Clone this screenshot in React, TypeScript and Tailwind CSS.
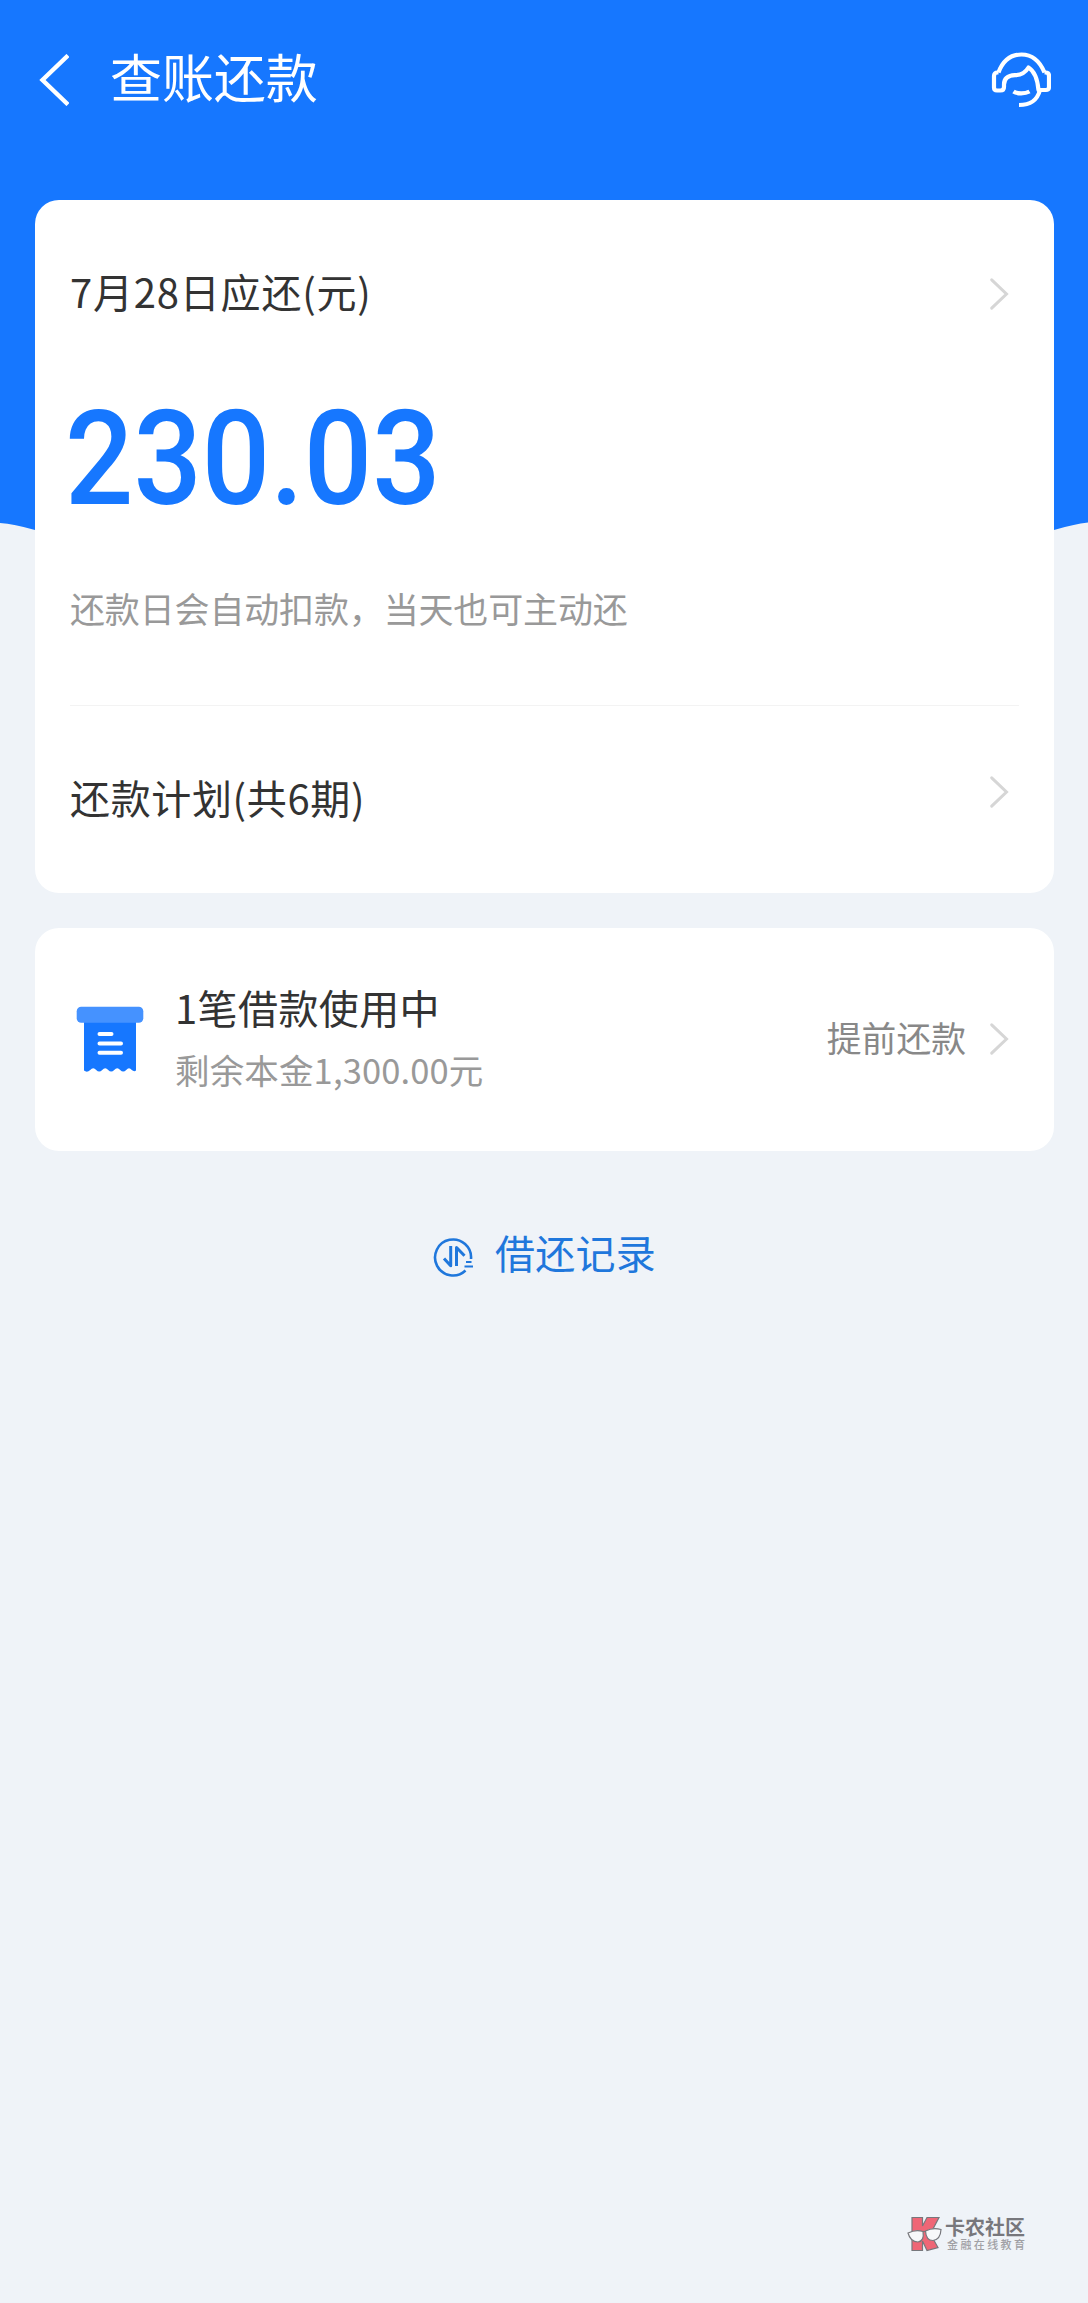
import React from "react";

const Chevron = () => (
  <svg className="block h-[34px] w-[20px] shrink-0" viewBox="0 0 20 34" fill="none">
    <path d="M2.7 2.8 17.500 17 2.7 31.2" stroke="#d6d6d6" strokeWidth="3" strokeLinecap="round" />
  </svg>
);

const BackIcon = () => (
  <svg className="block h-[52px] w-[32px] shrink-0" viewBox="0 0 32 52" fill="none">
    <path d="M31 1.5 5.5 26 31 50.5" stroke="#fff" strokeWidth="4.4" />
  </svg>
);

const HeadsetIcon = () => (
  <svg className="block h-[58px] w-[60px] shrink-0" viewBox="0 0 60 58" fill="none" stroke="#fff" strokeWidth="4.2" strokeLinejoin="round">
    <path d="M7.5 21.5C12 9.500 20 3.500 30.500 3.500S48.500 9.500 53.500 21.500" />
    <path d="M7.500 21.500H6.500Q3 21.500 3 25V36.500Q3 39.500 6 39.500H9.500Q13 39.500 13 36V33.500C13 27 17.500 24.500 24 24.200C31 24 34.500 21.500 37.500 16.500C44 20.500 46.500 28 47.500 39H55Q58 39 58 36V25Q58 21.500 54.500 21.500H53.500" />
    <path d="M49 39C46 50 39 54 28 54" />
    <path d="M22.500 40.500C26 43 34 43 38.500 40.500" />
  </svg>
);

const BillIcon = () => (
  <svg className="block h-[66px] w-[68px] shrink-0" viewBox="0 0 68 66">
    <path d="M8 12H60V64.500Q58 66 55.800 64Q53 60.500 50.200 64Q47.200 67 44.200 64Q41.200 60.500 38.200 64Q35.200 67 32.200 64Q29.200 60.500 26.200 64Q23.200 67 20.200 64Q17.200 60.500 14.200 64Q11 67 8 64.500Z" fill="#1677ff" />
    <rect x="0.700" y="0.700" width="66.600" height="16" rx="4.500" fill="#4592ff" />
    <path d="M23.500 28H35.500M23.500 37.500H45M23.500 46.800H45" stroke="#fff" strokeWidth="4" strokeLinecap="round" />
  </svg>
);

const RecordIcon = () => (
  <svg className="block h-[40px] w-[42px] shrink-0" viewBox="0 0 42 40" fill="none" stroke="#1f77dc" strokeWidth="2.600">
    <path d="M38 22A18 18 0 1 0 32.500 33.500" />
    <path d="M17.700 9V28.800L11 21.500M23.500 29V10.500L31.500 18.800" strokeWidth="3" strokeLinejoin="round" />
    <path d="M33 25H38.500M31.500 29.500H40" strokeWidth="2" />
  </svg>
);

const CommunityLogo = () => (
  <svg className="block h-[36px] w-[36px] shrink-0" viewBox="0 0 36 36">
    <path d="M5 1.500H15.500V10L20 1.500H32L26 13 24.500 20 31 31.500 20 34.500 15.500 25V34.500H5V22Z" fill="#ef6676" stroke="#77777c" strokeWidth="1.200" />
    <path d="M1 17Q9 13 16 15.500Q17.500 25 11 26Q3.500 26 1 17Z" fill="#f7f8fa" stroke="#77777c" strokeWidth="1.200" />
    <path d="M18.500 15Q26 11 34 13.500Q33.500 23.500 26 24.500Q19 24.500 18.500 15Z" fill="#f7f8fa" stroke="#77777c" strokeWidth="1.200" />
    <path d="M16 15.500H18.500" stroke="#77777c" strokeWidth="1.200" />
  </svg>
);

export default function App() {
  return (
    <div className="relative isolate flex h-[2303px] w-full flex-col overflow-hidden bg-[#eff3f8] px-[35px] font-['Noto_Sans_CJK_SC',sans-serif] text-[#333]">
      <svg className="absolute left-0 top-0 -z-10 h-[532px] w-full" viewBox="0 0 1088 532" preserveAspectRatio="none">
        <path d="M0 0H1088V522.500Q1074 524 1054 530H35Q14 524 0 523Z" fill="#1677ff" />
      </svg>

      <header className="flex h-[200px] items-start justify-between pt-[51px] text-white">
        <div className="flex items-start pl-[2px]">
          <div className="pt-[3px]"><BackIcon /></div>
          <h1 className="ml-[41px] -mt-[1px] text-[52px] leading-[52px] tracking-[-0.1px]">查账还款</h1>
        </div>
        <div className="mr-[2px]"><HeadsetIcon /></div>
      </header>

      <main className="flex flex-col gap-[35px]">
        <section className="flex h-[693px] w-[1019px] flex-col rounded-[24px] bg-white px-[35px]">
          <div className="mt-[67px] flex h-[50px] items-center justify-between pr-[10px]">
            <h2 className="-mt-[2px] text-[40px] leading-[50px] tracking-[0.8px]">7月28日应还(元)</h2>
            <div className="pt-[4px]"><Chevron /></div>
          </div>
          <div className="-ml-[5px] mt-[77px] h-[130px] w-fit origin-left scale-x-[0.912] whitespace-nowrap font-[Roboto] text-[132px] font-medium leading-[130px] text-[#1677ff]">230.03</div>
          <p className="mt-[62px] text-[35px] leading-[44px] tracking-[-0.15px] text-[#999]">还款日会自动扣款，当天也可主动还</p>
          <div className="mt-[75px] h-px bg-[#f3f3f3]" />
          <div className="mt-[63px] flex h-[50px] items-center justify-between pr-[10px]">
            <h2 className="pt-[5px] text-[40px] leading-[50px] tracking-[0.65px]">还款计划(共6期)</h2>
            <div className="-mt-[4px]"><Chevron /></div>
          </div>
        </section>

        <section className="flex h-[223px] w-[1019px] items-start rounded-[24px] bg-white pl-[41px] pr-[45px]">
          <div className="mt-[78px]"><BillIcon /></div>
          <div className="ml-[31px] mt-[54px] flex flex-col">
            <h3 className="text-[40px] leading-[50px] tracking-[0.4px]">1笔借款使用中</h3>
            <p className="mt-[15px] text-[34.500px] leading-[44px] tracking-[0.15px] text-[#999]">剩余本金1,300.00元</p>
          </div>
          <div className="ml-auto mt-[87px] flex items-center text-[#888]">
            <span className="text-[34.800px] leading-[44px]">提前还款</span>
            <div className="ml-[23px] pt-[4px]"><Chevron /></div>
          </div>
        </section>
      </main>

      <div className="mt-[76px] flex items-center justify-center pl-[1px] text-[#1f77dc]">
        <div className="pt-[10px]"><RecordIcon /></div>
        <span className="ml-[20px] text-[40px] leading-[50px] tracking-[0.3px]">借还记录</span>
      </div>

      <footer className="mb-[51px] mr-[27px] mt-auto flex items-center gap-[2px] self-end">
        <CommunityLogo />
        <div className="flex w-[81px] flex-col pt-[2px] text-[#77777c]">
          <span className="text-[20px] font-bold leading-[20px]">卡农社区</span>
          <span className="whitespace-nowrap pl-[2px] text-[11px] font-medium leading-[15px] tracking-[2.400px] text-[#a0a0a5]">金融在线教育</span>
        </div>
      </footer>
    </div>
  );
}
